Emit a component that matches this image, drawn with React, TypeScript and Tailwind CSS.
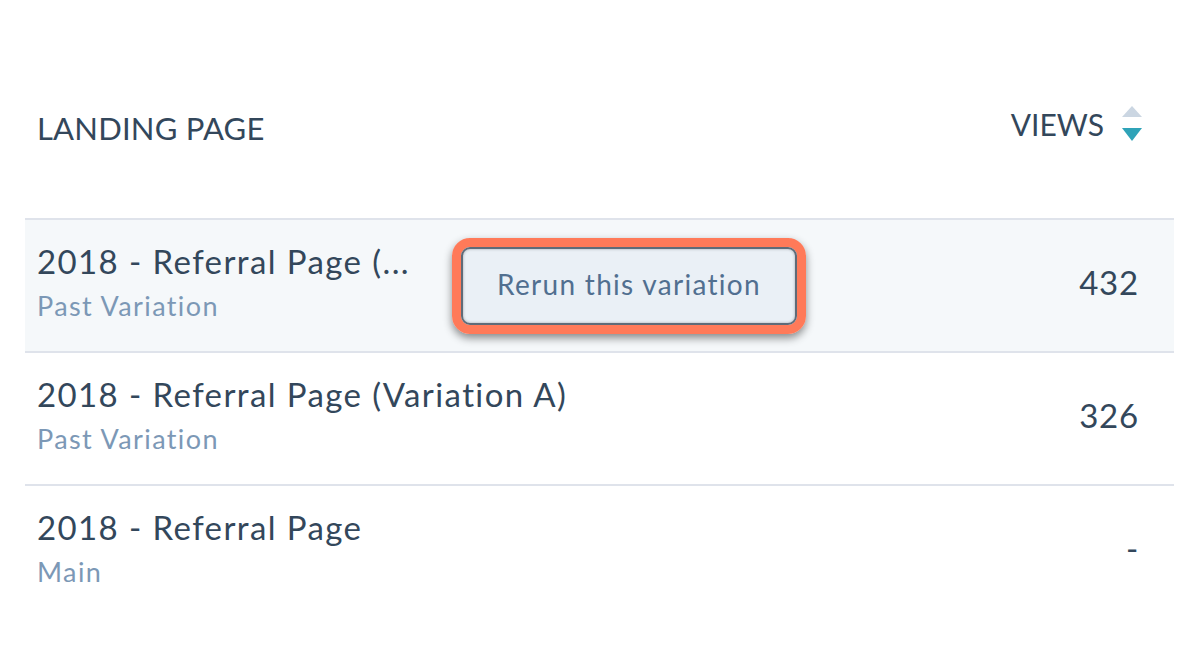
import React from 'react'

const rows = [
  { title: '2018 - Referral Page (...', sub: 'Past Variation', views: '432', hovered: true },
  { title: '2018 - Referral Page (Variation A)', sub: 'Past Variation', views: '326', hovered: false },
  { title: '2018 - Referral Page', sub: 'Main', views: '-', hovered: false },
]

function SortIcon() {
  return (
    <svg width="20" height="36" viewBox="0 0 20 36" className="block">
      <polygon points="10,0 20,11 0,11" fill="#cbd6e2" />
      <polygon points="0,22 20,22 10,35" fill="#2fa3b8" />
    </svg>
  )
}

export default function App() {
  return (
    <div className="w-full h-[669px] bg-white px-[25px] overflow-hidden" style={{ fontFamily: 'Lato, "Open Sans", sans-serif' }}>
      <div className="h-[218px] flex items-start justify-between pl-[12px] pr-[32px] pt-[108px] text-[#33475b]">
        <span className="text-[31px] leading-[40px] tracking-[0.2px]">LANDING PAGE</span>
        <span className="flex items-center gap-[18px] -mt-[4px]">
          <span className="text-[30px] leading-[40px]">VIEWS</span>
          <SortIcon />
        </span>
      </div>

      {rows.map((r, i) => (
        <div
          key={i}
          className={`h-[133px] border-t-2 border-[#dfe3eb] flex items-center justify-between pl-[12px] pr-[35px] pb-[6px] ${r.hovered ? 'bg-[#f5f8fa]' : ''}`}
        >
          <div className="flex items-center">
            <div className={`flex flex-col gap-[10px] ${r.hovered ? 'w-[382px]' : ''}`}>
              <span className="text-[33px] leading-[36px] tracking-[1.4px] text-[#33475b] whitespace-nowrap">{r.title}</span>
              <span className="text-[27px] leading-[34px] tracking-[1.4px] text-[#7c98b6]">{r.sub}</span>
            </div>
            {r.hovered && (
              <div className="ml-[33px] mt-[6px] rounded-[18px] border-[9px] border-[#ff7a59] shadow-[0_4px_8px_rgba(0,0,0,0.45)]">
                <button className="w-[336px] h-[78px] pb-[4px] rounded-[9px] border-2 border-[#5f6b78] bg-[#eaf0f6] text-[28px] tracking-[1.3px] text-[#516f90] shadow-[inset_0_0_3px_rgba(0,0,0,0.3)]">
                  Rerun this variation
                </button>
              </div>
            )}
          </div>
          <span className="text-[33px] tracking-[0.8px] text-[#33475b]">{r.views}</span>
        </div>
      ))}
    </div>
  )
}
